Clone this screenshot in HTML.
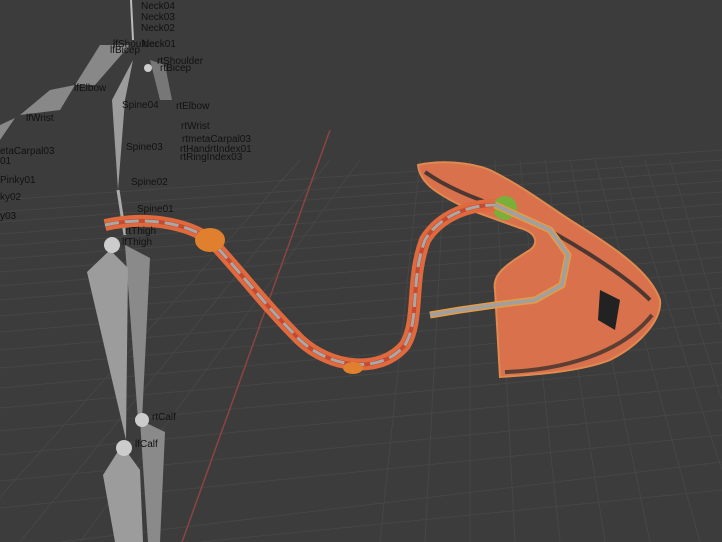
<!DOCTYPE html>
<html><head><style>
html,body{margin:0;padding:0;background:#3c3c3c;}
svg{display:block}
text{font-family:"Liberation Sans",sans-serif;font-size:10px;fill:#111;}
</style></head><body>
<svg width="722" height="542" viewBox="0 0 722 542" xmlns="http://www.w3.org/2000/svg">
<rect width="722" height="542" fill="#3c3c3c"/>
<g stroke="#464646" stroke-width="1" fill="none">
<path d="M0,200 L722,150 M0,222 L722,170 M0,246 L722,192 M0,272 L722,216 M0,300 L722,242 M0,332 L722,272 M0,368 L722,305 M0,408 L722,342 M0,455 L722,385 M0,508 L722,435 M200,542 L722,490"/>
<path d="M0,212 L722,160 M0,234 L722,181 M0,259 L722,204 M0,286 L722,229 M0,316 L722,257 M0,350 L722,288 M0,388 L722,323 M0,431 L722,363 M0,481 L722,410 M60,542 L722,462"/>
<path d="M20,542 L330,160 M80,542 L360,160 M380,542 L420,160 M470,542 L470,160 M560,542 L520,160 M650,542 L570,160 M722,470 L620,160 M722,330 L670,160"/>
<path d="M-40,542 L300,160 M425,542 L445,160 M515,542 L495,160 M605,542 L545,160 M700,542 L595,160 M722,400 L645,160"/>
</g>
<path d="M330,130 L182,542" stroke="#8a4444" stroke-width="1.5"/>
<!-- cloth -->
<path d="M418,165 C440,160 470,162 490,170 C520,185 540,200 570,220 C610,245 650,270 660,300 C662,320 640,345 610,360 C580,372 530,375 500,377 L495,290 C492,275 505,265 530,250 C540,242 535,232 520,228 L470,210 C440,195 420,185 418,165 Z" fill="#d8714c" stroke="#e08a50" stroke-width="2"/>
<path d="M425,172 C450,190 480,200 520,215 C560,235 620,270 650,300" stroke="#2a2a2a" stroke-width="4" fill="none" opacity="0.8"/>
<path d="M505,372 C560,370 620,355 652,315" stroke="#2a2a2a" stroke-width="4" fill="none" opacity="0.7"/>
<path d="M600,290 L620,300 L615,330 L598,320 Z" fill="#222"/>
<circle cx="505" cy="208" r="12" fill="#7ab03a"/>
<!-- skeleton gray -->
<g fill="#9c9c9c">
<path d="M125,245 L150,258 L142,420 L138,420 Z" fill="#8a8a8a"/>
<path d="M110,250 L128,268 L126,440 L87,272 Z"/>
<path d="M140,420 L165,432 L160,542 L148,542 Z" fill="#8a8a8a"/>
<path d="M122,445 L140,470 L143,542 L115,542 L103,475 Z"/>
<path d="M133,60 L112,100 L118,190 L125,100 Z"/>
<path d="M130,45 L100,45 L75,85 L95,85 Z" fill="#888"/>
<path d="M75,85 L50,90 L20,115 L60,110 Z" fill="#888"/>
<path d="M150,60 L165,65 L172,100 L160,100 Z" fill="#777"/>
<path d="M15,118 L0,125 L0,140 Z" fill="#888"/>
<path d="M131,0 L133,40" stroke="#bbb" stroke-width="2"/>
<path d="M118,190 L125,235" stroke="#aaa" stroke-width="3"/>
</g>
<g fill="#ccc"><circle cx="112" cy="245" r="8"/><circle cx="142" cy="420" r="7"/><circle cx="124" cy="448" r="8"/><circle cx="148" cy="68" r="4"/></g>
<!-- snake -->
<path d="M105,225 C150,215 190,225 210,240 C235,265 260,300 300,340 C330,368 380,375 405,345 C420,320 410,280 425,240 C440,215 470,205 495,205" stroke="#e06a3e" stroke-width="12" fill="none"/>
<path d="M105,225 C150,215 190,225 210,240 C235,265 260,300 300,340 C330,368 380,375 405,345 C420,320 410,280 425,240 C440,215 470,205 495,205" stroke="#c44a30" stroke-width="4" fill="none"/>
<path d="M105,225 C150,215 190,225 210,240 C235,265 260,300 300,340 C330,368 380,375 405,345 C420,320 410,280 425,240 C440,215 470,205 495,205" stroke="#a8a8a8" stroke-width="3" stroke-dasharray="14 6" fill="none"/>
<path d="M495,205 L550,230 L568,255 L562,285 L535,300 L495,305 L460,310 L430,315" stroke="#e89a40" stroke-width="7" fill="none"/>
<path d="M495,205 L550,230 L568,255 L562,285 L535,300 L495,305 L460,310 L430,315" stroke="#a0a0a0" stroke-width="4" fill="none"/>
<ellipse cx="210" cy="240" rx="15" ry="12" fill="#e0802e"/>
<ellipse cx="353" cy="368" rx="10" ry="6" fill="#e0802e"/>
<!-- labels -->
<text x="141" y="9">Neck04</text><text x="141" y="20">Neck03</text><text x="141" y="31">Neck02</text>
<text x="113" y="47">lfShoulder</text><text x="142" y="47">Neck01</text><text x="110" y="53">lfBicep</text>
<text x="157" y="64">rtShoulder</text><text x="160" y="71">rtBicep</text>
<text x="74" y="91">lfElbow</text><text x="122" y="108">Spine04</text><text x="176" y="109">rtElbow</text>
<text x="26" y="121">lfWrist</text><text x="181" y="129">rtWrist</text>
<text x="182" y="142">rtmetaCarpal03</text><text x="0" y="154">etaCarpal03</text>
<text x="126" y="150">Spine03</text><text x="180" y="152">rtHandrtIndex01</text><text x="180" y="160">rtRingIndex03</text>
<text x="0" y="164">01</text><text x="0" y="183">Pinky01</text><text x="131" y="185">Spine02</text>
<text x="0" y="200">ky02</text><text x="137" y="212">Spine01</text><text x="0" y="219">y03</text>
<text x="125" y="234">rtThigh</text><text x="122" y="245">lfThigh</text>
<text x="152" y="420">rtCalf</text><text x="135" y="447">lfCalf</text>
</svg>
</body></html>
